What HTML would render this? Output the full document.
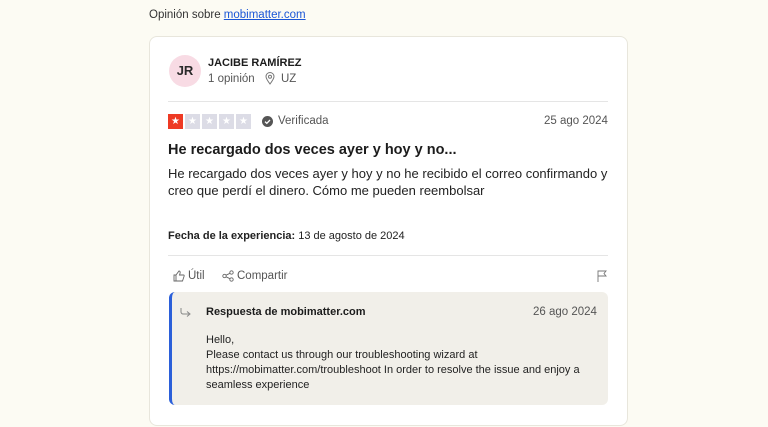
<!DOCTYPE html><html><head><meta charset="utf-8"><style>
*{margin:0;padding:0;box-sizing:border-box}
body{width:768px;height:427px;background:#fcfbf3;font-family:"Liberation Sans",Arial,sans-serif;color:#1c1c1c;position:relative;overflow:hidden}
.a{position:absolute;white-space:nowrap}
</style></head><body>
<div class="a" style="left:149px;top:9px;font-size:11.5px;color:#333">Opinión sobre <span style="color:#1a56d6;text-decoration:underline">mobimatter.com</span></div>
<div class="a" style="left:149px;top:36px;width:479px;height:390px;background:#fff;border:1px solid #e8e6dc;border-radius:8px"></div>
<div class="a" style="left:169px;top:55px;width:32px;height:32px;border-radius:50%;background:#f8dbe4;font-size:13px;font-weight:bold;text-align:center;line-height:32px;color:#2a2a2a">JR</div>
<div class="a" style="left:208px;top:57px;font-size:11px;font-weight:bold">JACIBE RAMÍREZ</div>
<div class="a" style="left:208px;top:73px;font-size:11.5px;color:#555">1 opinión</div>
<svg class="a" style="left:265px;top:72px" width="10" height="13" viewBox="0 0 10 13"><path d="M5 12C2 8 1 6 1 4.5A4 4 0 0 1 9 4.5C9 6 8 8 5 12Z" fill="none" stroke="#777" stroke-width="1"/><circle cx="5" cy="4.7" r="1.5" fill="none" stroke="#777"/></svg>
<div class="a" style="left:281px;top:73px;font-size:11.5px;color:#555">UZ</div>
<div class="a" style="left:168px;top:101px;width:440px;height:1px;background:#e5e5e5"></div>
<div class="a" style="left:168px;top:114px;display:flex;gap:2px">
<span style="width:15px;height:15px;background:#ee3a24;color:#fff;font-size:10px;text-align:center;line-height:15px">★</span>
<span style="width:15px;height:15px;background:#dcdce6;color:#fff;font-size:10px;text-align:center;line-height:15px">★</span>
<span style="width:15px;height:15px;background:#dcdce6;color:#fff;font-size:10px;text-align:center;line-height:15px">★</span>
<span style="width:15px;height:15px;background:#dcdce6;color:#fff;font-size:10px;text-align:center;line-height:15px">★</span>
<span style="width:15px;height:15px;background:#dcdce6;color:#fff;font-size:10px;text-align:center;line-height:15px">★</span></div>
<svg class="a" style="left:262px;top:116px" width="11" height="11" viewBox="0 0 11 11"><circle cx="5.5" cy="5.5" r="5.5" fill="#555"/><path d="M3 5.6L4.8 7.3L8 4" fill="none" stroke="#fff" stroke-width="1.3"/></svg>
<div class="a" style="left:278px;top:115px;font-size:11.5px;color:#555">Verificada</div>
<div class="a" style="left:544px;top:115px;font-size:11.5px;color:#555">25 ago 2024</div>
<div class="a" style="left:168px;top:142px;font-size:14.5px;font-weight:bold">He recargado dos veces ayer y hoy y no...</div>
<div class="a" style="left:168px;top:165px;font-size:13px;line-height:17px;color:#222">He recargado dos veces ayer y hoy y no he recibido el correo confirmando y<br>creo que perdí el dinero. Cómo me pueden reembolsar</div>
<div class="a" style="left:168px;top:230px;font-size:11px;color:#222"><b>Fecha de la experiencia:</b> 13 de agosto de 2024</div>
<div class="a" style="left:168px;top:255px;width:440px;height:1px;background:#e5e5e5"></div>
<svg class="a" style="left:173px;top:270px" width="12" height="12" viewBox="0 0 12 12"><path d="M1 5H3V11H1ZM3 5L6 1C7 1 7.5 2 7 3.5L6.5 5H10.5C11 5 11.5 5.5 11 6.5L9.5 11H3" fill="none" stroke="#666" stroke-width="0.9"/></svg>
<div class="a" style="left:188px;top:270px;font-size:11.5px;color:#555">Útil</div>
<svg class="a" style="left:222px;top:270px" width="12" height="12" viewBox="0 0 12 12"><circle cx="2.5" cy="6" r="1.7" fill="none" stroke="#666" stroke-width="0.9"/><circle cx="9.5" cy="2.5" r="1.7" fill="none" stroke="#666" stroke-width="0.9"/><circle cx="9.5" cy="9.5" r="1.7" fill="none" stroke="#666" stroke-width="0.9"/><path d="M4 5.2L8 3.3M4 6.8L8 8.7" stroke="#666" stroke-width="0.9"/></svg>
<div class="a" style="left:237px;top:270px;font-size:11.5px;color:#555">Compartir</div>
<svg class="a" style="left:597px;top:270px" width="11" height="13" viewBox="0 0 11 13"><path d="M1 12V1H9L7 3.5L9 6H1" fill="none" stroke="#777" stroke-width="0.9"/></svg>
<div class="a" style="left:169px;top:292px;width:439px;height:113px;background:#f1efe9;border-left:3px solid #2b5fd9;border-radius:6px"></div>
<svg class="a" style="left:180px;top:307px" width="13" height="11" viewBox="0 0 13 11"><path d="M1 1V5C1 6 2 7 3 7H9M7 4.5L10 7L7 9.5" fill="none" stroke="#888" stroke-width="1"/></svg>
<div class="a" style="left:206px;top:306px;font-size:11px;font-weight:bold">Respuesta de mobimatter.com</div>
<div class="a" style="left:533px;top:306px;font-size:11.5px;color:#555">26 ago 2024</div>
<div class="a" style="left:206px;top:333px;font-size:11px;line-height:15px;color:#222">Hello,<br>Please contact us through our troubleshooting wizard at<br>https://mobimatter.com/troubleshoot In order to resolve the issue and enjoy a<br>seamless experience</div>
</body></html>
